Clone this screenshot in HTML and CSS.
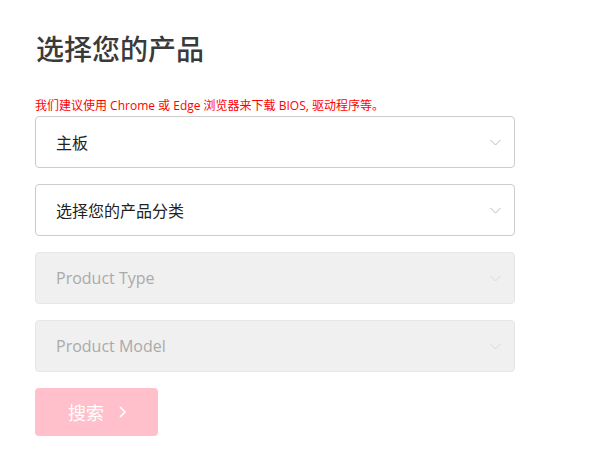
FILE: index.html
```html
<!DOCTYPE html>
<html lang="zh">
<head>
<meta charset="utf-8">
<title>选择您的产品</title>
<link rel="stylesheet" href="styles.css">
</head>
<body>
<main class="finder">
  <h1 class="title">选择您的产品</h1>
  <p class="notice">我们建议使用 Chrome 或 Edge 浏览器来下载 BIOS, 驱动程序等。</p>
  <div class="fields">
    <div class="select">
      <span class="label">主板</span>
      <svg class="chev" width="11" height="7" viewBox="0 0 11 7"><path d="M0.5 1 L5.5 6 L10.5 1" fill="none" stroke="#c8b8a8" stroke-width="1"/></svg>
    </div>
    <div class="select">
      <span class="label">选择您的产品分类</span>
      <svg class="chev" width="11" height="7" viewBox="0 0 11 7"><path d="M0.5 1 L5.5 6 L10.5 1" fill="none" stroke="#c8b8a8" stroke-width="1"/></svg>
    </div>
    <div class="select disabled">
      <span class="label">Product Type</span>
      <svg class="chev" width="11" height="7" viewBox="0 0 11 7"><path d="M0.5 1 L5.5 6 L10.5 1" fill="none" stroke="#d8d8d8" stroke-width="1"/></svg>
    </div>
    <div class="select disabled">
      <span class="label">Product Model</span>
      <svg class="chev" width="11" height="7" viewBox="0 0 11 7"><path d="M0.5 1 L5.5 6 L10.5 1" fill="none" stroke="#d8d8d8" stroke-width="1"/></svg>
    </div>
    <button class="search" type="button">
      <span>搜索</span>
      <svg width="9" height="14" viewBox="0 0 9 14"><path d="M2 2 L7 7 L2 12" fill="none" stroke="#ffffff" stroke-width="1.6"/></svg>
    </button>
  </div>
</main>
</body>
</html>
```
FILE: styles.css
```css
html, body {
  margin: 0;
  padding: 0;
  background: #ffffff;
}
body {
  font-family: "Open Sans", "Noto Sans CJK SC", sans-serif;
}
.finder {
  padding: 30px 0 0 35px;
  width: 480px;
}
.title {
  margin: 0 0 0 1px;
  font-size: 28px;
  line-height: 36px;
  font-weight: 500;
  color: #3a3a3a;
  font-family: "Noto Sans CJK SC", sans-serif;
}
.notice {
  margin: 32px 0 0 0;
  font-size: 12px;
  line-height: 16px;
  color: #ff0000;
  font-family: "Open Sans", "Noto Sans CJK SC", sans-serif;
}
.fields {
  display: flex;
  flex-direction: column;
  gap: 16px;
  margin-top: 2px;
}
.select {
  height: 52px;
  box-sizing: border-box;
  border: 1px solid #cccccc;
  border-radius: 4px;
  display: flex;
  align-items: center;
  justify-content: space-between;
  padding: 0 13px 0 20px;
  background: #ffffff;
}
.label {
  font-size: 16px;
  color: #222222;
  font-family: "Open Sans", "Noto Sans CJK SC", sans-serif;
}
.select.disabled {
  background: #f0f0f0;
  border-color: #e6e6e6;
}
.select.disabled .label {
  color: #aaaaaa;
}
.chev {
  display: block;
}
.search {
  width: 123px;
  height: 48px;
  border: none;
  border-radius: 4px;
  background: #ffc0cb;
  color: #ffffff;
  font-size: 18px;
  font-family: "Noto Sans CJK SC", sans-serif;
  display: flex;
  align-items: center;
  justify-content: center;
  gap: 14px;
  padding: 0 0 0 2px;
}
.search svg {
  display: block;
}
```
